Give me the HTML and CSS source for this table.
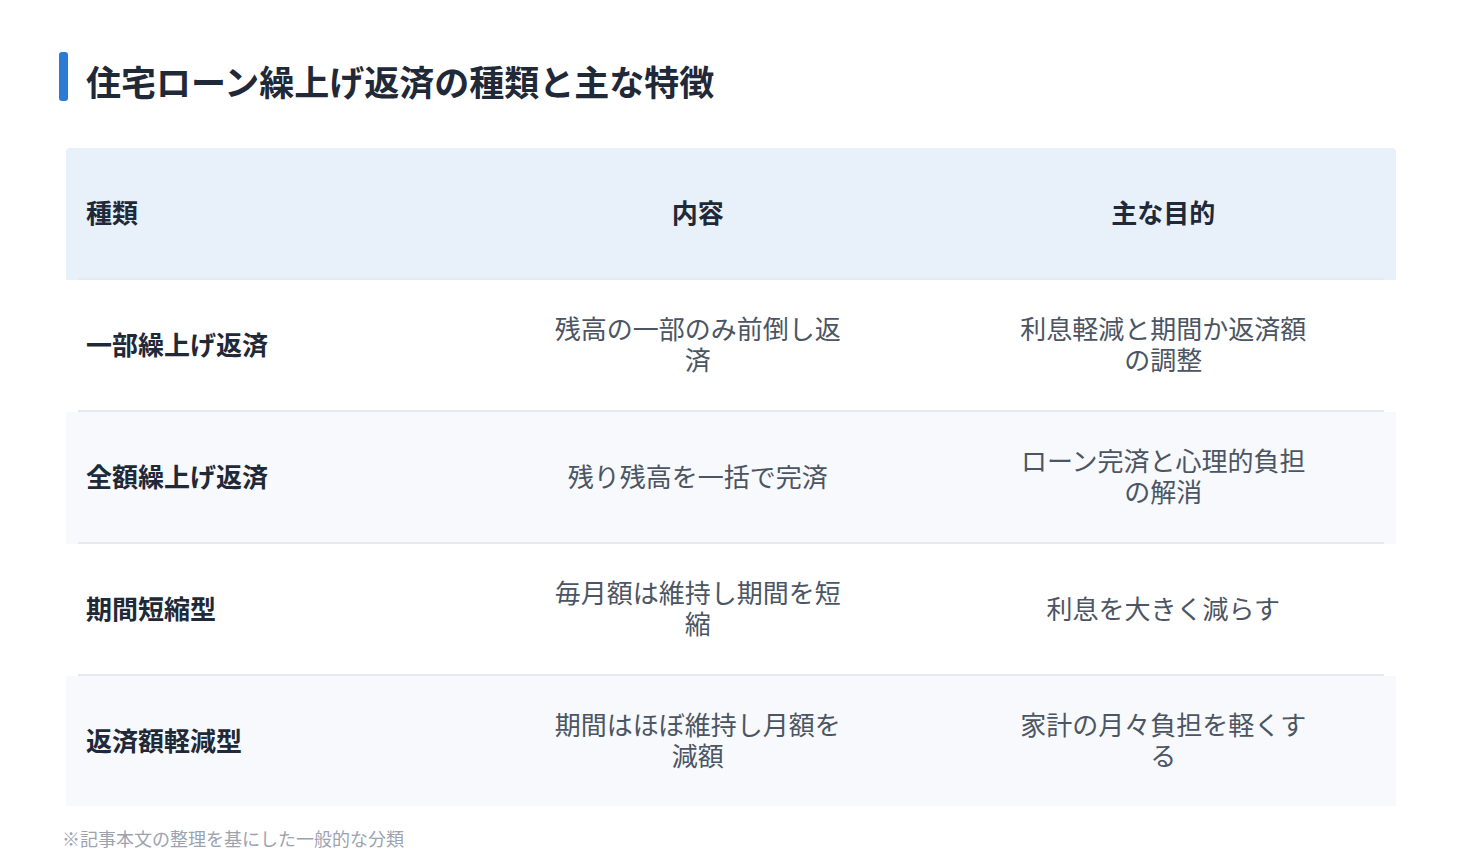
FILE: index.html
```html
<!DOCTYPE html>
<html lang="ja">
<head>
<meta charset="utf-8">
<title>住宅ローン繰上げ返済の種類と主な特徴</title>
<link rel="stylesheet" href="styles.css">
</head>
<body>
<main class="page">
  <h1 class="title"><span class="title-bar"></span><span class="title-text">住宅ローン繰上げ返済の種類と主な特徴</span></h1>
  <div class="table">
    <div class="row head">
      <div class="cell first">種類</div>
      <div class="cell">内容</div>
      <div class="cell">主な目的</div>
    </div>
    <div class="row">
      <div class="cell first">一部繰上げ返済</div>
      <div class="cell">残高の一部のみ前倒し返済</div>
      <div class="cell">利息軽減と期間か返済額の調整</div>
    </div>
    <div class="row alt">
      <div class="cell first">全額繰上げ返済</div>
      <div class="cell">残り残高を一括で完済</div>
      <div class="cell">ローン完済と心理的負担の解消</div>
    </div>
    <div class="row">
      <div class="cell first">期間短縮型</div>
      <div class="cell">毎月額は維持し期間を短縮</div>
      <div class="cell">利息を大きく減らす</div>
    </div>
    <div class="row alt last">
      <div class="cell first">返済額軽減型</div>
      <div class="cell">期間はほぼ維持し月額を減額</div>
      <div class="cell">家計の月々負担を軽くする</div>
    </div>
  </div>
  <p class="note">※記事本文の整理を基にした一般的な分類</p>
</main>
</body>
</html>
```
FILE: styles.css
```css
* { box-sizing: border-box; }
html, body { margin: 0; padding: 0; background: #ffffff; }
body {
  font-family: "Noto Sans CJK JP", "Noto Sans", sans-serif;
  color: #1f2937;
}
.page {
  padding: 52px 66px 0 59px;
}
.title {
  display: flex;
  align-items: flex-start;
  gap: 18px;
  margin: 0;
  height: 49px;
  font-size: 35px;
  font-weight: 700;
  color: #1f2937;
}
.title-bar {
  width: 9px;
  height: 49px;
  border-radius: 3px;
  background: #2b7bd6;
  flex: none;
}
.title-text {
  line-height: 49px;
  margin-top: 4px;
}
.table {
  margin: 47px 0 0 7px;
  width: 1330px;
}
.row {
  position: relative;
  display: grid;
  grid-template-columns: 30% 35% 35%;
  height: 132px;
  padding-bottom: 2px;
  background: #ffffff;
}
.row::after {
  content: "";
  position: absolute;
  left: 12px;
  right: 12px;
  bottom: 0;
  height: 2px;
  background: #e6eaf0;
}
.row.head {
  background: #e8f0fa;
  border-radius: 4px 4px 0 0;
}
.row.alt { background: #f7f9fc; }
.row.last { height: 130px; padding-bottom: 0; }
.row.last::after { display: none; }
.cell {
  display: flex;
  align-items: center;
  justify-content: center;
  text-align: center;
  padding: 0 80px 4px;
  font-size: 26px;
  line-height: 31px;
  color: #4b5563;
}
.cell.first {
  justify-content: flex-start;
  text-align: left;
  padding: 0 20px 4px;
  font-weight: 700;
  color: #1f2937;
}
.head .cell {
  font-weight: 700;
  color: #1f2937;
}
.note {
  margin: 19px 0 0 3px;
  font-size: 18px;
  line-height: 26px;
  color: #9ca3af;
}
```
